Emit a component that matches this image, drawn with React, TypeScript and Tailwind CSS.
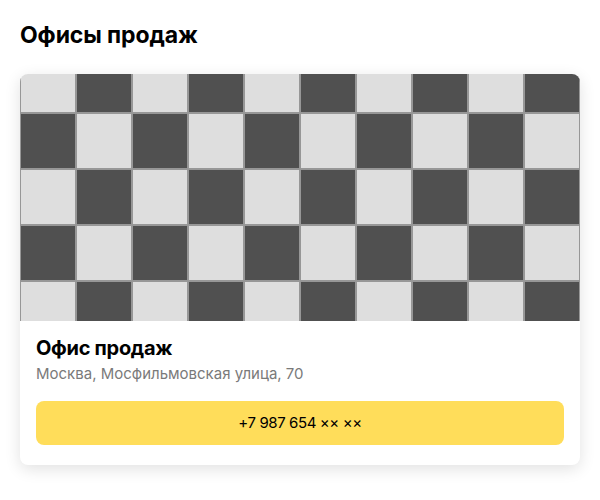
import React from "react";

export default function App() {
  const rows = 6;
  const cols = 10;
  const cells: React.ReactNode[] = [];
  for (let r = 0; r < rows; r++) {
    for (let c = 0; c < cols; c++) {
      const dark = (r + c) % 2 === 1;
      cells.push(
        <div
          key={`${r}-${c}`}
          className={
            dark
              ? "h-[56px] w-[56px] border border-[#979797] bg-[#505050]"
              : "h-[56px] w-[56px] border border-[#979797] bg-[#dedede]"
          }
        />
      );
    }
  }
  return (
    <div className="min-h-[500px] w-[600px] bg-white px-5 pt-[20px] font-['Inter','Noto_Sans',sans-serif] text-black">
      <h1 className="text-[23px] font-bold leading-[30px] tracking-[-0.1px]">Офисы продаж</h1>
      <div className="mt-[24px] overflow-hidden rounded-[8px] bg-white shadow-[0_4px_16px_rgba(0,0,0,0.12)]">
        <div className="h-[247px] overflow-hidden">
          <div className="mt-[-17px] grid grid-cols-[repeat(10,56px)]">{cells}</div>
        </div>
        <div className="px-4 pb-5 pt-[14px]">
          <div className="text-[20px] font-bold leading-[26px] tracking-[-0.3px]">Офис продаж</div>
          <div className="mt-[1px] text-[15px] leading-[24px] text-[#7a7a7a]">Москва, Мосфильмовская улица, 70</div>
          <button className="mt-[15px] flex h-[44px] w-full items-center justify-center rounded-[8px] bg-[#ffdd5a] text-[15px] tracking-[-0.4px] text-black">
            +7 987 654 ×× ××
          </button>
        </div>
      </div>
    </div>
  );
}
